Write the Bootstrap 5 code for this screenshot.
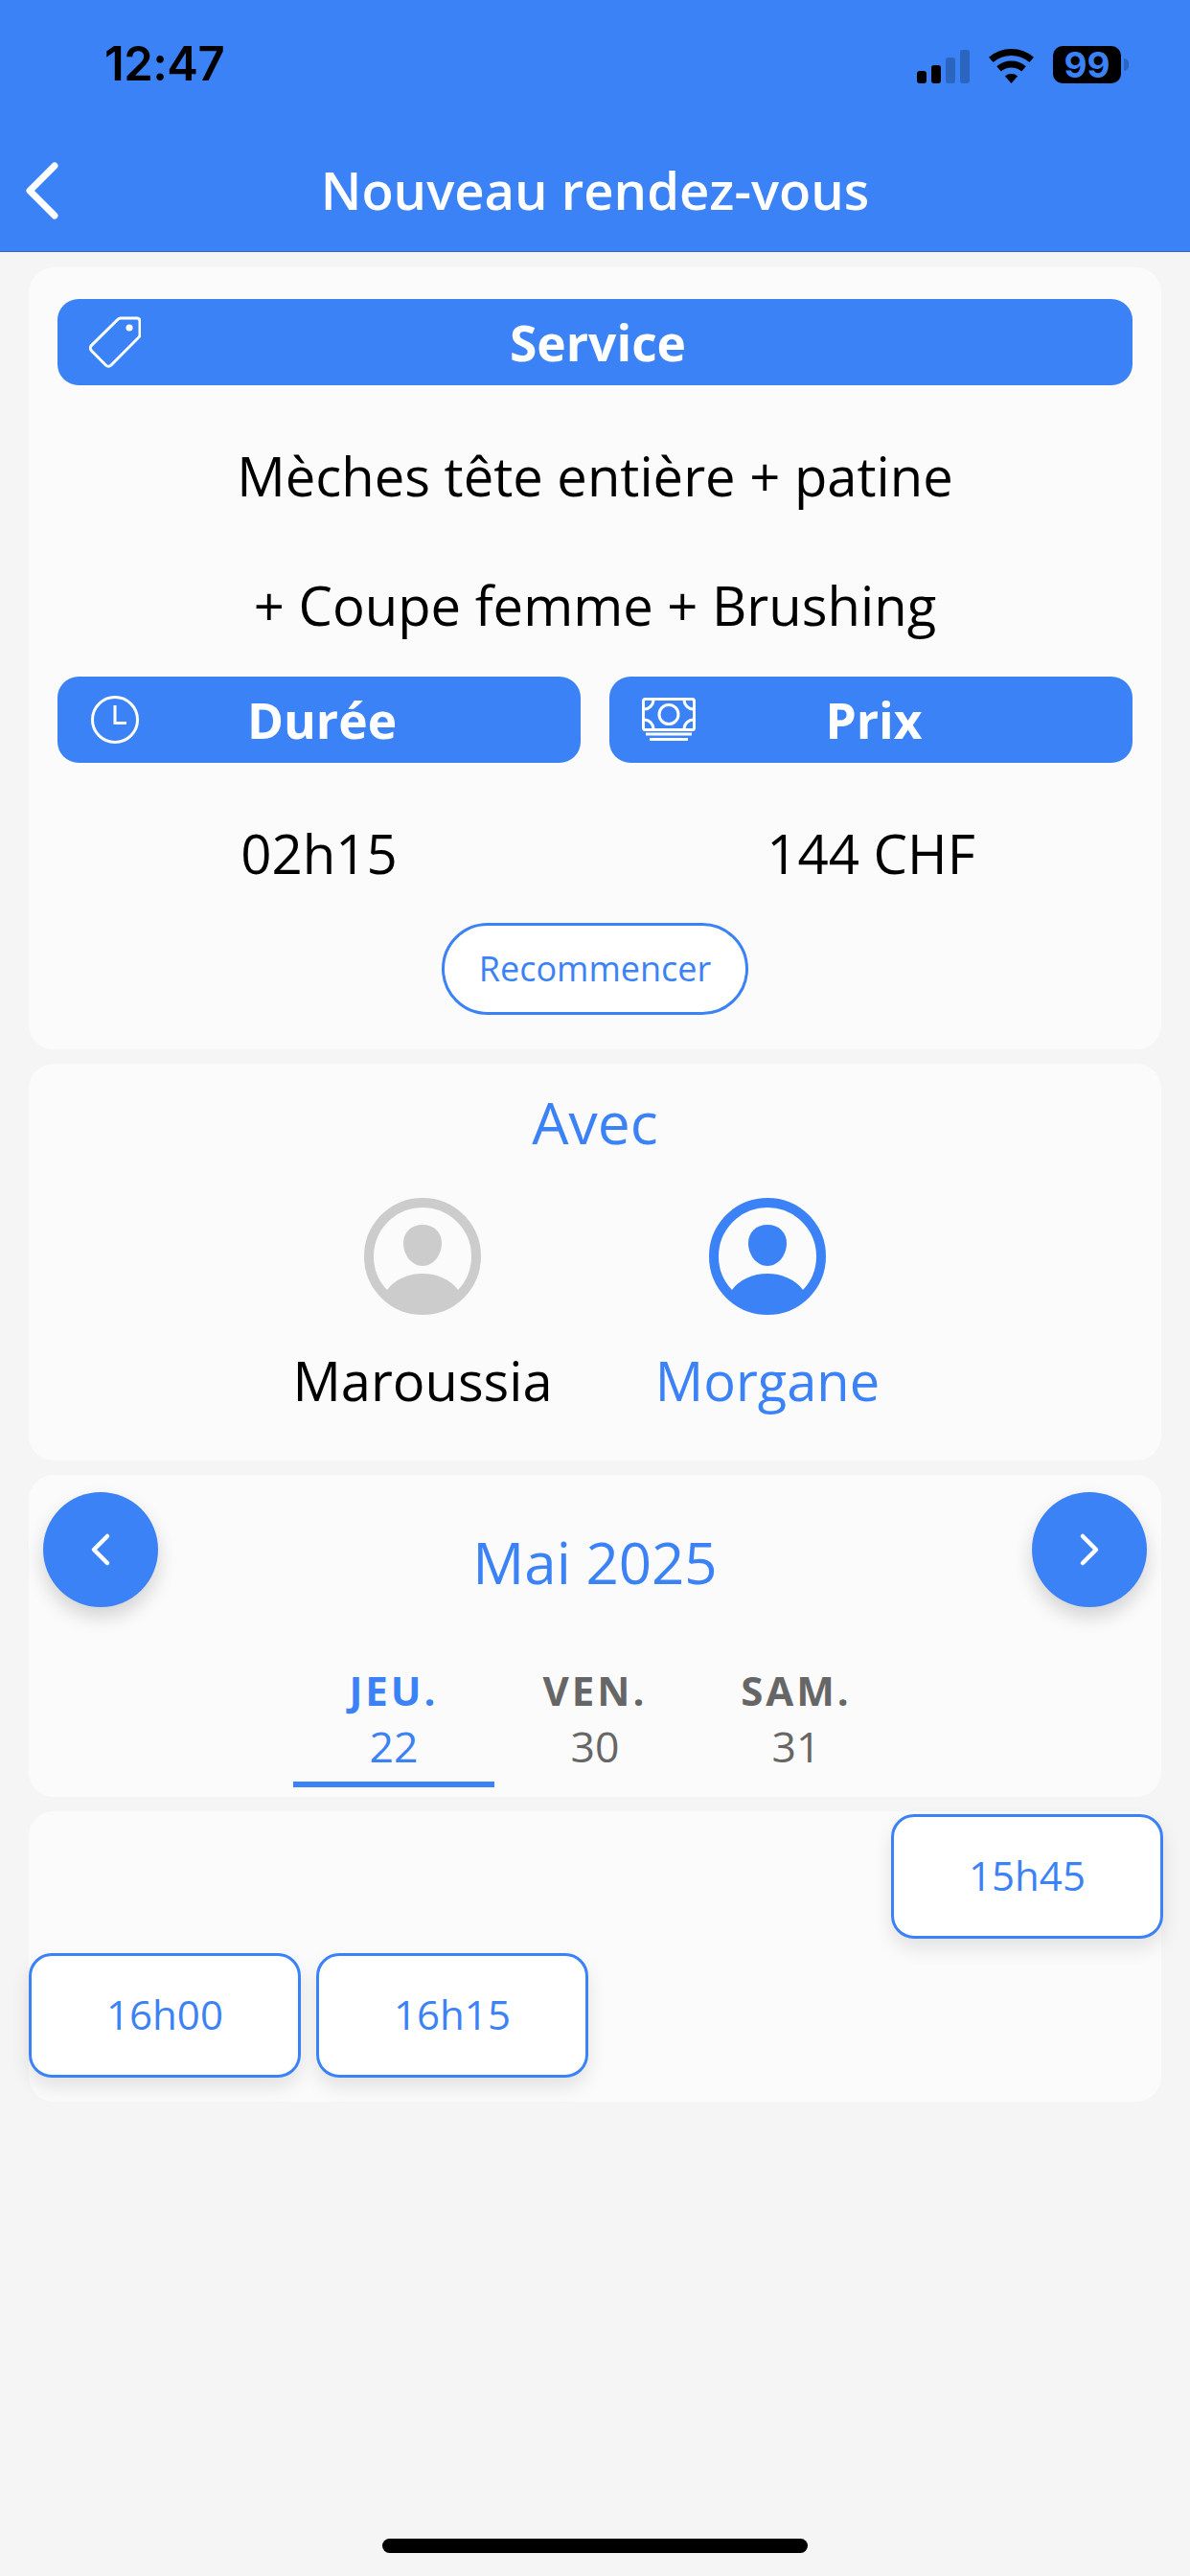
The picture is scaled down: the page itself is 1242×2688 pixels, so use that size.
<!DOCTYPE html>
<html lang="fr">
<head>
    <meta charset="UTF-8">
    <meta name="viewport" content="width=device-width, initial-scale=1.0">
    <title>Nouveau rendez-vous</title>
    <link rel="stylesheet" href="https://cdn.jsdelivr.net/npm/bootstrap@5.3.0/dist/css/bootstrap.min.css">
    <style>
        :root {
            --app-blue: #3b82f6;
        }
        html, body {
            height: 100%;
        }
        body {
            background-color: #f5f5f5;
            font-family: "Open Sans", "Noto Sans", sans-serif;
            color: #000;
            min-height: 2688px;
        }
        .top-zone {
            background: var(--app-blue);
            height: 263px;
            border-bottom: 1px solid #2f68c4;
        }
        .status-line {
            height: 137px;
            padding: 48px 64px 0 109px;
        }
        .clock-text {
            font-family: Inter, "Liberation Sans", sans-serif;
            font-weight: 600;
            font-size: 49px;
            line-height: 38px;
            letter-spacing: -0.5px;
        }
        .signal-bars {
            height: 35px;
            gap: 5px;
            margin-right: 20px;
        }
        .signal-bars span {
            width: 10px;
            border-radius: 3px;
            background: #000;
        }
        .signal-bars span:nth-child(1) { height: 13px; }
        .signal-bars span:nth-child(2) { height: 19px; }
        .signal-bars span:nth-child(3) { height: 27px; background: #2c65c0; }
        .signal-bars span:nth-child(4) { height: 35px; background: #2c65c0; }
        .wifi-mark {
            margin-right: 20px;
        }
        .batt-box {
            width: 71px;
            height: 39px;
            border-radius: 10px;
            background: #000;
            color: var(--app-blue);
            font-family: Inter, "Liberation Sans", sans-serif;
            font-weight: 700;
            font-size: 37px;
            line-height: 39px;
        }
        .batt-nub {
            width: 5px;
            height: 13px;
            margin-left: 3px;
            background: #2c65c0;
            border-radius: 0 6px 6px 0;
        }
        .nav-line {
            height: 125px;
            padding-bottom: 2px;
        }
        .back-link {
            left: 24px;
            top: 30px;
        }
        .screen-title {
            font-size: 54.4px;
            font-weight: 600;
            color: #fff;
            margin: 0;
        }
        .page-body {
            padding: 16px 30px 0;
            gap: 15px;
        }
        .panel {
            background: #fbfbfb;
            border: 0;
            border-radius: 26px;
        }
        .panel-service {
            height: 816px;
            padding: 33px 30px 0;
        }
        .head-bar {
            display: grid;
            grid-template-columns: 1fr auto 1fr;
            align-items: center;
            height: 90px;
            border-radius: 22px;
            background: var(--app-blue);
            color: #fff;
            font-size: 51.5px;
            font-weight: 700;
            padding: 0 27px 0 33px;
        }
        .head-bar span {
            padding-top: 2px;
        }
        .service-lines {
            padding-top: 27px;
            margin-bottom: 7px;
        }
        .service-lines p {
            margin: 0;
            font-size: 56.2px;
            line-height: 135px;
            text-align: center;
        }
        .pair-row {
            --bs-gutter-x: 30px;
            --bs-gutter-y: 0;
        }
        .value-text {
            font-size: 56.4px;
            line-height: 96px;
            margin-top: 47px;
            margin-bottom: 1px;
        }
        .restart-btn {
            width: 320px;
            height: 96px;
            border: 3px solid var(--app-blue);
            border-radius: 48px;
            background: #fff;
            color: var(--app-blue);
            font-size: 36px;
            padding: 0;
            margin-top: 23px;
        }
        .panel-with {
            height: 414px;
            padding-top: 21px;
        }
        .with-label {
            font-size: 60.5px;
            line-height: 80px;
            color: var(--app-blue);
        }
        .staff-row {
            margin-top: 39px;
        }
        .staff-cell {
            width: 360px;
        }
        .staff-name {
            font-size: 56px;
            line-height: 76px;
            margin-top: 30px;
        }
        .staff-on {
            color: var(--app-blue);
        }
        .panel-date {
            height: 336px;
            padding: 18px 15px 0;
        }
        .round-btn {
            width: 120px;
            height: 120px;
            border-radius: 50%;
            border: 0;
            padding: 0;
            background: var(--app-blue);
            box-shadow: 0 10px 20px rgba(0, 0, 0, .16);
        }
        .month-text {
            font-size: 60px;
            line-height: 80px;
            color: var(--app-blue);
            margin-top: 33px;
        }
        .day-tabs {
            margin-top: 58px;
        }
        .day-tab {
            width: 210px;
            color: #666;
            text-align: center;
            padding-bottom: 8px;
            border-bottom: 6px solid transparent;
        }
        .day-tab.on {
            color: var(--app-blue);
            border-bottom-color: var(--app-blue);
        }
        .day-name {
            font-size: 42px;
            font-weight: 700;
            letter-spacing: 3px;
            line-height: 58px;
        }
        .day-num {
            font-size: 44.5px;
            line-height: 58px;
        }
        .panel-slots {
            height: 303px;
            display: grid;
            grid-template-columns: repeat(4, 284px);
            column-gap: 16px;
            row-gap: 15px;
            align-content: start;
            padding-top: 3px;
        }
        .slot-btn {
            height: 130px;
            border: 3px solid var(--app-blue);
            border-radius: 24px;
            background: #fff;
            color: var(--app-blue);
            font-size: 42px;
            padding: 0 0 3px;
            box-shadow: 0 10px 20px rgba(0, 0, 0, .1);
        }
        .slot-last {
            grid-column: 4;
        }
        .home-bar {
            left: 399px;
            bottom: 24px;
            width: 444px;
            height: 15px;
            border-radius: 8px;
            background: #000;
        }
    </style>
</head>
<body class="position-relative">
    <header class="top-zone">
        <div class="status-line d-flex justify-content-between align-items-start">
            <div class="clock-text">12:47</div>
            <div class="d-flex align-items-end">
                <div class="signal-bars d-flex align-items-end">
                    <span></span><span></span><span></span><span></span>
                </div>
                <svg class="wifi-mark" width="47" height="36" viewBox="0 0 47 36">
                    <path d="M2.3 11.4A32.5 32.5 0 0 1 44.7 11.4" fill="none" stroke="#000" stroke-width="7"/>
                    <path d="M10.5 20.8A20 20 0 0 1 36.5 20.8" fill="none" stroke="#000" stroke-width="7"/>
                    <path d="M23.5 36L16.9 28.4A10 10 0 0 1 30.1 28.4Z" fill="#000"/>
                </svg>
                <div class="d-flex align-items-center">
                    <div class="batt-box text-center">99</div>
                    <div class="batt-nub"></div>
                </div>
            </div>
        </div>
        <div class="nav-line position-relative d-flex justify-content-center align-items-center">
            <a class="back-link position-absolute" href="#" aria-label="Retour">
                <svg class="d-block" width="42" height="64" viewBox="0 0 42 64">
                    <path d="M33 6L7 32L33 58" fill="none" stroke="#fff" stroke-width="7" stroke-linecap="round" stroke-linejoin="round"/>
                </svg>
            </a>
            <h1 class="screen-title">Nouveau rendez-vous</h1>
        </div>
    </header>

    <main class="page-body d-flex flex-column">
        <section class="panel panel-service d-flex flex-column">
            <div class="head-bar">
                <svg width="54" height="54" viewBox="33 20 54 54">
                    <path d="M66 22H83a3 3 0 0 1 3 3V39a4 4 0 0 1-1.2 3L56 71a4 4 0 0 1-5.6 0L35.500 56a4 4 0 0 1 0-5.600L63 23.200a4 4 0 0 1 3-1.200Z" fill="none" stroke="#fff" stroke-width="3"/>
                    <circle cx="75" cy="32" r="3.6" fill="#fff"/>
                </svg>
                <span>Service</span>
            </div>
            <div class="service-lines">
                <p>Mèches tête entière + patine</p>
                <p>+ Coupe femme + Brushing</p>
            </div>
            <div class="row pair-row">
                <div class="col-6">
                    <div class="head-bar">
                        <svg width="52" height="52" viewBox="-1 0 52 52">
                            <circle cx="26" cy="26" r="23.5" fill="none" stroke="#fff" stroke-width="3"/>
                            <path d="M26 11V29.5H38" fill="none" stroke="#fff" stroke-width="3"/>
                        </svg>
                        <span>Durée</span>
                    </div>
                    <div class="value-text text-center">02h15</div>
                </div>
                <div class="col-6">
                    <div class="head-bar">
                        <svg width="60" height="48" viewBox="17 26 60 48">
                            <rect x="19.5" y="28.5" width="53" height="32" rx="2" fill="none" stroke="#fff" stroke-width="3"/>
                            <circle cx="46" cy="44.5" r="10" fill="none" stroke="#fff" stroke-width="3"/>
                            <path d="M21 39a10 10 0 0 0 9-9M71 39a10 10 0 0 1-9-9M21 50a10 10 0 0 1 9 9M71 50a10 10 0 0 0-9 9" fill="none" stroke="#fff" stroke-width="3"/>
                            <path d="M22 65H70M26 70.500H66" fill="none" stroke="#fff" stroke-width="3"/>
                        </svg>
                        <span>Prix</span>
                    </div>
                    <div class="value-text text-center">144 CHF</div>
                </div>
            </div>
            <div class="text-center">
                <button type="button" class="btn restart-btn">Recommencer</button>
            </div>
        </section>

        <section class="panel panel-with text-center">
            <div class="with-label">Avec</div>
            <div class="staff-row d-flex justify-content-center">
                <div class="staff-cell">
                    <svg width="122" height="122" viewBox="0 0 122 122" fill="#ccc">
                        <circle cx="61" cy="61" r="56" fill="none" stroke="#ccc" stroke-width="10"/>
                        <path d="M61 28C73 28 81 36 81 47C81 60 72 71 61 71C50 71 41 60 41 47C41 36 49 28 61 28Z"/>
                        <path d="M24 96C32 85 46 79 61 79C76 79 90 85 98 96L100.900 98.700A55 55 0 0 1 21.100 98.700Z"/>
                    </svg>
                    <div class="staff-name">Maroussia</div>
                </div>
                <div class="staff-cell">
                    <svg width="122" height="122" viewBox="0 0 122 122" fill="#3b82f6">
                        <circle cx="61" cy="61" r="56" fill="none" stroke="#3b82f6" stroke-width="10"/>
                        <path d="M61 28C73 28 81 36 81 47C81 60 72 71 61 71C50 71 41 60 41 47C41 36 49 28 61 28Z"/>
                        <path d="M24 96C32 85 46 79 61 79C76 79 90 85 98 96L100.900 98.700A55 55 0 0 1 21.100 98.700Z"/>
                    </svg>
                    <div class="staff-name staff-on">Morgane</div>
                </div>
            </div>
        </section>

        <section class="panel panel-date">
            <div class="d-flex justify-content-between align-items-start">
                <button type="button" class="btn round-btn" aria-label="Précédent">
                    <svg width="24" height="36" viewBox="0 0 24 36">
                        <path d="M19 4L5 18L19 32" fill="none" stroke="#fff" stroke-width="4.500" stroke-linecap="round" stroke-linejoin="round"/>
                    </svg>
                </button>
                <div class="month-text">Mai 2025</div>
                <button type="button" class="btn round-btn" aria-label="Suivant">
                    <svg width="24" height="36" viewBox="0 0 24 36">
                        <path d="M5 4L19 18L5 32" fill="none" stroke="#fff" stroke-width="4.500" stroke-linecap="round" stroke-linejoin="round"/>
                    </svg>
                </button>
            </div>
            <div class="day-tabs d-flex justify-content-center">
                <div class="day-tab on">
                    <div class="day-name">JEU.</div>
                    <div class="day-num">22</div>
                </div>
                <div class="day-tab">
                    <div class="day-name">VEN.</div>
                    <div class="day-num">30</div>
                </div>
                <div class="day-tab">
                    <div class="day-name">SAM.</div>
                    <div class="day-num">31</div>
                </div>
            </div>
        </section>

        <section class="panel panel-slots">
            <button type="button" class="btn slot-btn slot-last">15h45</button>
            <button type="button" class="btn slot-btn">16h00</button>
            <button type="button" class="btn slot-btn">16h15</button>
        </section>
    </main>

    <div class="home-bar position-absolute"></div>

    <script src="https://cdn.jsdelivr.net/npm/bootstrap@5.3.0/dist/js/bootstrap.bundle.min.js"></script>
</body>
</html>
